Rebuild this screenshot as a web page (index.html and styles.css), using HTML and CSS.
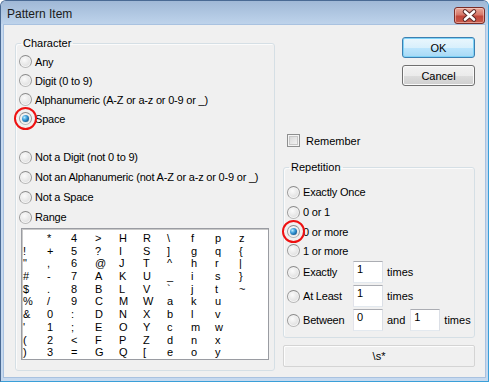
FILE: index.html
```html
<!DOCTYPE html>
<html lang="en">
<head>
  <meta charset="UTF-8" />
  <title>Pattern Item</title>
  <link rel="stylesheet" href="styles.css">
</head>
<body>

  <div class="window">
    <div class="titlebar">
      <span class="title">Pattern Item</span>
      <button class="close-btn" aria-label="Close">
        <svg width="31" height="17" viewBox="0 0 31 17">
          <path d="M11 4.5 L20 12.5 M20 4.5 L11 12.5" stroke="#5a2a28" stroke-width="4.6" stroke-linecap="round" fill="none"/>
          <path d="M11 4.5 L20 12.5 M20 4.5 L11 12.5" stroke="#ffffff" stroke-width="2.6" stroke-linecap="round" fill="none"/>
        </svg>
      </button>
    </div>

    <div class="client">
      <fieldset class="group group-char">
        <legend>Character</legend>
        <div class="opts first">
          <label class="opt"><span class="radio"></span>Any</label>
          <label class="opt"><span class="radio"></span>Digit (0 to 9)</label>
          <label class="opt"><span class="radio"></span>Alphanumeric (A-Z or a-z or 0-9 or _)</label>
          <label class="opt"><span class="radio checked marked"></span>Space</label>
        </div>
        <div class="opts second">
          <label class="opt"><span class="radio"></span>Not a Digit (not 0 to 9)</label>
          <label class="opt"><span class="radio"></span>Not an Alphanumeric (not A-Z or a-z or 0-9 or _)</label>
          <label class="opt"><span class="radio"></span>Not a Space</label>
          <label class="opt"><span class="radio"></span>Range</label>
        </div>
        <div class="listbox">
          <span>&nbsp;</span><span>!</span><span>"</span><span>#</span><span>$</span><span>%</span><span>&amp;</span><span>'</span><span>(</span><span>)</span>
          <span>*</span><span>+</span><span>,</span><span>-</span><span>.</span><span>/</span><span>0</span><span>1</span><span>2</span><span>3</span>
          <span>4</span><span>5</span><span>6</span><span>7</span><span>8</span><span>9</span><span>:</span><span>;</span><span>&lt;</span><span>=</span>
          <span>&gt;</span><span>?</span><span>@</span><span>A</span><span>B</span><span>C</span><span>D</span><span>E</span><span>F</span><span>G</span>
          <span>H</span><span>I</span><span>J</span><span>K</span><span>L</span><span>M</span><span>N</span><span>O</span><span>P</span><span>Q</span>
          <span>R</span><span>S</span><span>T</span><span>U</span><span>V</span><span>W</span><span>X</span><span>Y</span><span>Z</span><span>[</span>
          <span>\</span><span>]</span><span>^</span><span>_</span><span>`</span><span>a</span><span>b</span><span>c</span><span>d</span><span>e</span>
          <span>f</span><span>g</span><span>h</span><span>i</span><span>j</span><span>k</span><span>l</span><span>m</span><span>n</span><span>o</span>
          <span>p</span><span>q</span><span>r</span><span>s</span><span>t</span><span>u</span><span>v</span><span>w</span><span>x</span><span>y</span>
          <span>z</span><span>{</span><span>|</span><span>}</span><span>~</span>
        </div>
      </fieldset>

      <div class="side">
        <button class="btn btn-default">OK</button>
        <button class="btn btn-cancel">Cancel</button>

        <label class="check-row"><span class="checkbox"></span>Remember</label>

        <fieldset class="group group-rep">
          <legend>Repetition</legend>
          <div class="opts">
            <label class="opt"><span class="radio"></span>Exactly Once</label>
            <label class="opt"><span class="radio"></span>0 or 1</label>
            <label class="opt"><span class="radio checked marked"></span>0 or more</label>
            <label class="opt"><span class="radio"></span>1 or more</label>
          </div>
          <div class="count-row">
            <span class="radio"></span><span class="lbl">Exactly</span>
            <input class="num" type="text" value="1">
            <span class="word">times</span>
          </div>
          <div class="count-row">
            <span class="radio"></span><span class="lbl">At Least</span>
            <input class="num" type="text" value="1">
            <span class="word">times</span>
          </div>
          <div class="count-row">
            <span class="radio"></span><span class="lbl">Between</span>
            <input class="num" type="text" value="0">
            <span class="word and">and</span>
            <input class="num" type="text" value="1">
            <span class="word">times</span>
          </div>
        </fieldset>

        <div class="result">\s*</div>
      </div>
    </div>
  </div>

</body>
</html>
```

FILE: styles.css
```css
body {
  margin: 0;
  font-family: "Liberation Sans", Arial, sans-serif;
  font-size: 11px;
  color: #000;
  background: #fff;
}

.window {
  width: 489px;
  height: 382px;
  box-sizing: border-box;
  background: #c6d9ef;
  border: 1px solid #4a6a94;
  border-right-color: #3a9fd8;
  border-bottom-color: #3a9fd8;
  border-radius: 6px 6px 0 0;
  display: flex;
  flex-direction: column;
  overflow: hidden;
}

.titlebar {
  height: 23px;
  flex: none;
  display: flex;
  align-items: center;
  padding: 0 3px 0 6px;
  background: linear-gradient(to bottom, #a0b8d6 0%, #afc6e1 50%, #bed3eb 100%);
}

.title {
  font-size: 12px;
  color: #1a1a1a;
  padding-top: 3px;
}

.close-btn {
  margin-left: auto;
  margin-top: 6px;
  width: 31px;
  height: 17px;
  padding: 0;
  border: 1px solid #7a2e28;
  border-radius: 3px;
  background: linear-gradient(to bottom, #e9a99b 0%, #d6786a 45%, #c1473b 55%, #c8594a 100%);
  box-shadow: inset 0 0 0 1px rgba(255, 220, 210, 0.5);
  display: flex;
  align-items: center;
  justify-content: center;
}

.close-btn svg {
  display: block;
  margin: -1px;
}

.client {
  flex: none;
  height: 352px;
  margin: 1px 3px 4px 3px;
  box-sizing: border-box;
  background: #f0f0f0;
  box-shadow: 0 0 0 1px #a9c2e0;
  display: flex;
  gap: 8px;
  padding: 12px 10px 0 11px;
}

/* group boxes */
.group {
  margin: 0;
  padding: 0 0 0 3px;
  min-width: 0;
  border: 1px solid #d5dfe5;
  border-radius: 3px;
  box-shadow: inset 1px 1px 0 #fbfbfb;
}

.group legend {
  padding: 0 2px;
  margin-left: 2px;
  line-height: 13px;
  font-size: 11px;
}

.group-char {
  width: 260px;
  box-sizing: border-box;
  padding-bottom: 10px;
  align-self: flex-start;
}

.opts.first {
  margin-top: 2px;
}

.opts.second {
  margin-top: 19px;
}

.opt {
  display: flex;
  align-items: center;
  height: 19px;
  white-space: nowrap;
  letter-spacing: -0.2px;
}

.opts.second .opt {
  height: 20px;
}

.group-rep .opt:nth-child(-n+2) {
  height: 20px;
}

/* radio glyph */
.radio {
  position: relative;
  flex: none;
  width: 13px;
  height: 13px;
  box-sizing: border-box;
  margin-right: 3px;
  border-radius: 50%;
  border: 1px solid #999;
  border-top-color: #8a8a8a;
  border-bottom-color: #b8b8b8;
  background: radial-gradient(circle at 40% 35%, #fbfbfb 0%, #e6e6e6 55%, #d2d2d2 100%);
  box-shadow: inset 0 0 0 1px #f4f4f4;
}

.radio.checked::after {
  content: "";
  position: absolute;
  left: 2px;
  top: 2px;
  width: 7px;
  height: 7px;
  border-radius: 50%;
  background: radial-gradient(circle at 35% 35%, #b6ecff 0%, #3a9ad8 40%, #145f98 75%, #0c3f68 100%);
}

.radio.marked::before {
  content: "";
  position: absolute;
  left: -6px;
  top: -6px;
  width: 23px;
  height: 23px;
  box-sizing: border-box;
  border: 2.5px solid #ee1111;
  border-radius: 50%;
}

/* character list */
.listbox {
  margin: 1px 0 0 2px;
  width: 248px;
  height: 132px;
  box-sizing: border-box;
  border: 1px solid #9a9ca2;
  box-shadow: inset 1px 1px 0 #c9c9c9;
  background: #fff;
  padding: 3px 0 0 1px;
  display: grid;
  grid-auto-flow: column;
  grid-template-rows: repeat(10, 12.7px);
  grid-auto-columns: 24px;
  line-height: 12.7px;
  overflow: hidden;
}

/* right column */
.side {
  width: 192px;
  display: flex;
  flex-direction: column;
}

.btn {
  align-self: flex-end;
  width: 73px;
  height: 21px;
  box-sizing: border-box;
  padding: 0;
  font-family: "Liberation Sans", Arial, sans-serif;
  font-size: 11px;
  color: #000;
  border-radius: 3px;
}

.btn-default {
  border: 1px solid #3c7fb1;
  background: linear-gradient(to bottom, #eaf6fd 0%, #d9f0fc 50%, #bee6fd 51%, #a7d9f5 100%);
  box-shadow: inset 0 0 0 1px #7fd3f7;
}

.btn-cancel {
  margin-top: 7px;
  border: 1px solid #707070;
  background: linear-gradient(to bottom, #f2f2f2 0%, #ebebeb 50%, #dddddd 51%, #cfcfcf 100%);
  box-shadow: inset 0 0 0 1px #fafafa;
}

.check-row {
  margin: 48px 0 0 4px;
  height: 13px;
  display: flex;
  align-items: center;
}

.checkbox {
  width: 13px;
  height: 13px;
  box-sizing: border-box;
  margin-right: 6px;
  border: 1px solid #8e8f8f;
  background: linear-gradient(135deg, #d2d2d2 0%, #e6e6e6 50%, #f8f8f8 100%);
  box-shadow: inset 0 0 0 1px #f4f4f4, inset 0 0 0 2px #c8c8c8;
}

.group-rep {
  margin-top: 14px;
  padding-bottom: 5px;
}

.group-rep .opts {
  margin-top: 8px;
}

.count-row {
  height: 24px;
  display: flex;
  align-items: center;
}

.lbl {
  width: 50px;
  letter-spacing: -0.2px;
}

.num {
  width: 30px;
  height: 22px;
  box-sizing: border-box;
  margin: 0 4px 0 0;
  padding: 0 0 7px 3px;
  font-family: "Liberation Sans", Arial, sans-serif;
  font-size: 11px;
  color: #000;
  border: 1px solid #dbdfe6;
  border-top-color: #abadb3;
  border-left-color: #e2e3ea;
  border-right-color: #dbdfe6;
  border-bottom-color: #e3e9ef;
  background: #fff;
  outline: none;
}

.word.and {
  margin-right: 5px;
}

.result {
  margin-top: 7px;
  height: 22px;
  box-sizing: border-box;
  border: 1px solid #d4d4d4;
  border-radius: 2px;
  box-shadow: inset 1px 1px 0 #fdfdfd;
  display: flex;
  align-items: center;
  justify-content: center;
}
```
